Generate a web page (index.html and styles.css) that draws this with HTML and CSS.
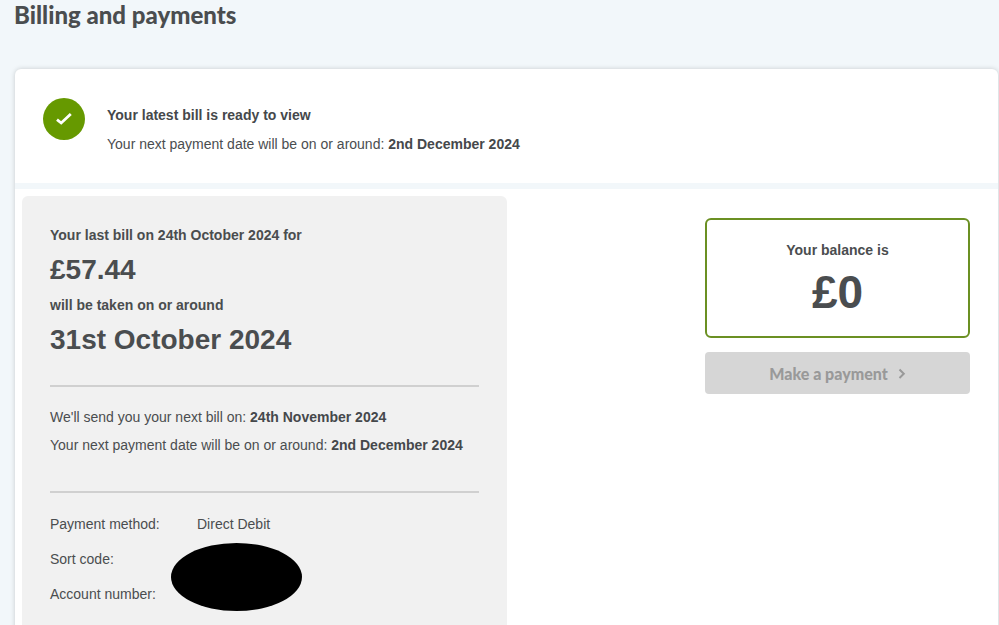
FILE: index.html
```html
<!DOCTYPE html>
<html lang="en">
<head>
  <meta charset="UTF-8" />
  <meta name="viewport" content="width=device-width, initial-scale=1.0"/>
  <title>Billing and payments</title>
  <link rel="stylesheet" href="styles.css">
</head>
<body>

  <h1>Billing and payments</h1>

  <main class="card">
    <section class="status">
      <div class="tick">
        <svg width="18" height="16" viewBox="0 0 18 16" aria-hidden="true">
          <path d="M2 8.6 L6.2 12 L15.8 3" fill="none" stroke="#fff" stroke-width="2.8"/>
        </svg>
      </div>
      <div class="status-text">
        <p><strong>Your latest bill is ready to view</strong></p>
        <p>Your next payment date will be on or around: <strong>2nd December 2024</strong></p>
      </div>
    </section>

    <section class="details">
      <div class="bill">
        <h2>Your last bill on 24th October 2024 for</h2>
        <p class="big">£57.44</p>
        <h2>will be taken on or around</h2>
        <p class="big">31st October 2024</p>
        <hr>
        <div class="next">
          <p>We'll send you your next bill on: <strong>24th November 2024</strong></p>
          <p>Your next payment date will be on or around: <strong>2nd December 2024</strong></p>
        </div>
        <hr>
        <div class="method-wrap">
          <dl class="method">
            <dt>Payment method:</dt>
            <dd>Direct Debit</dd>
            <dt>Sort code:</dt>
            <dd></dd>
            <dt>Account number:</dt>
            <dd></dd>
          </dl>
          <div class="redacted"></div>
        </div>
      </div>

      <div class="side">
        <div class="balance">
          <h2>Your balance is</h2>
          <p class="total">£0</p>
        </div>
        <button class="pay" type="button" disabled>
          Make a payment
          <svg width="8" height="12" viewBox="0 0 8 12" aria-hidden="true">
            <path d="M1.5 2.5 L5.8 6.8 L1.5 11" fill="none" stroke="#999" stroke-width="2"/>
          </svg>
        </button>
      </div>
    </section>
  </main>

</body>
</html>
```
FILE: styles.css
```css
* {
  box-sizing: border-box;
}

html {
  overflow-x: hidden;
}

body {
  font-family: "Liberation Sans", Arial, sans-serif;
  font-size: 14px;
  line-height: 29px;
  color: #4a4d4f;
  margin: 0;
  background: #f2f7fa;
}

h1, h2, p, dl, dd {
  margin: 0;
}

h1 {
  font-family: Lato, sans-serif;
  font-size: 24px;
  font-weight: 900;
  line-height: 30px;
  margin-left: 14px;
}

h2 {
  font-size: 14px;
  line-height: 30px;
}

strong {
  color: #45484b;
}

.card {
  margin: 39px 1px 0 15px;
  background: #fff;
  border-radius: 6px;
  box-shadow: 0 0 5px rgba(0,0,0,0.18);
}

.status {
  display: flex;
  gap: 22px;
  padding: 29px 28px 24px;
  border-bottom: 6px solid #f2f7fa;
}

.tick {
  width: 42px;
  height: 42px;
  border-radius: 50%;
  background: #690;
  display: flex;
  align-items: center;
  justify-content: center;
}

.status-text {
  padding-top: 3px;
}

.details {
  display: flex;
  justify-content: space-between;
  align-items: flex-start;
  padding: 7px 28px 0 7px;
}

.bill {
  width: 485px;
  padding: 24px 28px;
  background: #f1f1f1;
  border-radius: 6px;
}

.big {
  font-size: 28px;
  font-weight: bold;
  line-height: 40px;
}

hr {
  border: 0;
  border-top: 2px solid #d0d0d0;
  margin: 25px 0 16px;
}

.next {
  line-height: 28px;
  padding-bottom: 7px;
}

.method-wrap {
  position: relative;
}

.method {
  display: grid;
  grid-template-columns: 147px 1fr;
  grid-auto-rows: 35px;
  line-height: 31px;
}

/* covers the account details */
.redacted {
  position: absolute;
  left: 121px;
  top: 34px;
  width: 131px;
  height: 68px;
  border-radius: 50%;
  background: #000;
}

.side {
  width: 265px;
  padding-top: 22px;
}

.balance {
  border: 2px solid #6b9023;
  border-radius: 6px;
  padding: 15px 20px 17px;
  text-align: center;
}

.total {
  font-size: 46px;
  font-weight: bold;
  line-height: 54px;
}

.pay {
  display: flex;
  align-items: center;
  justify-content: center;
  gap: 10px;
  width: 100%;
  height: 42px;
  margin-top: 14px;
  border: 0;
  border-radius: 4px;
  background: #d6d6d6;
  color: #999;
  font-family: Lato, sans-serif;
  font-size: 16px;
  font-weight: 900;
}
```
